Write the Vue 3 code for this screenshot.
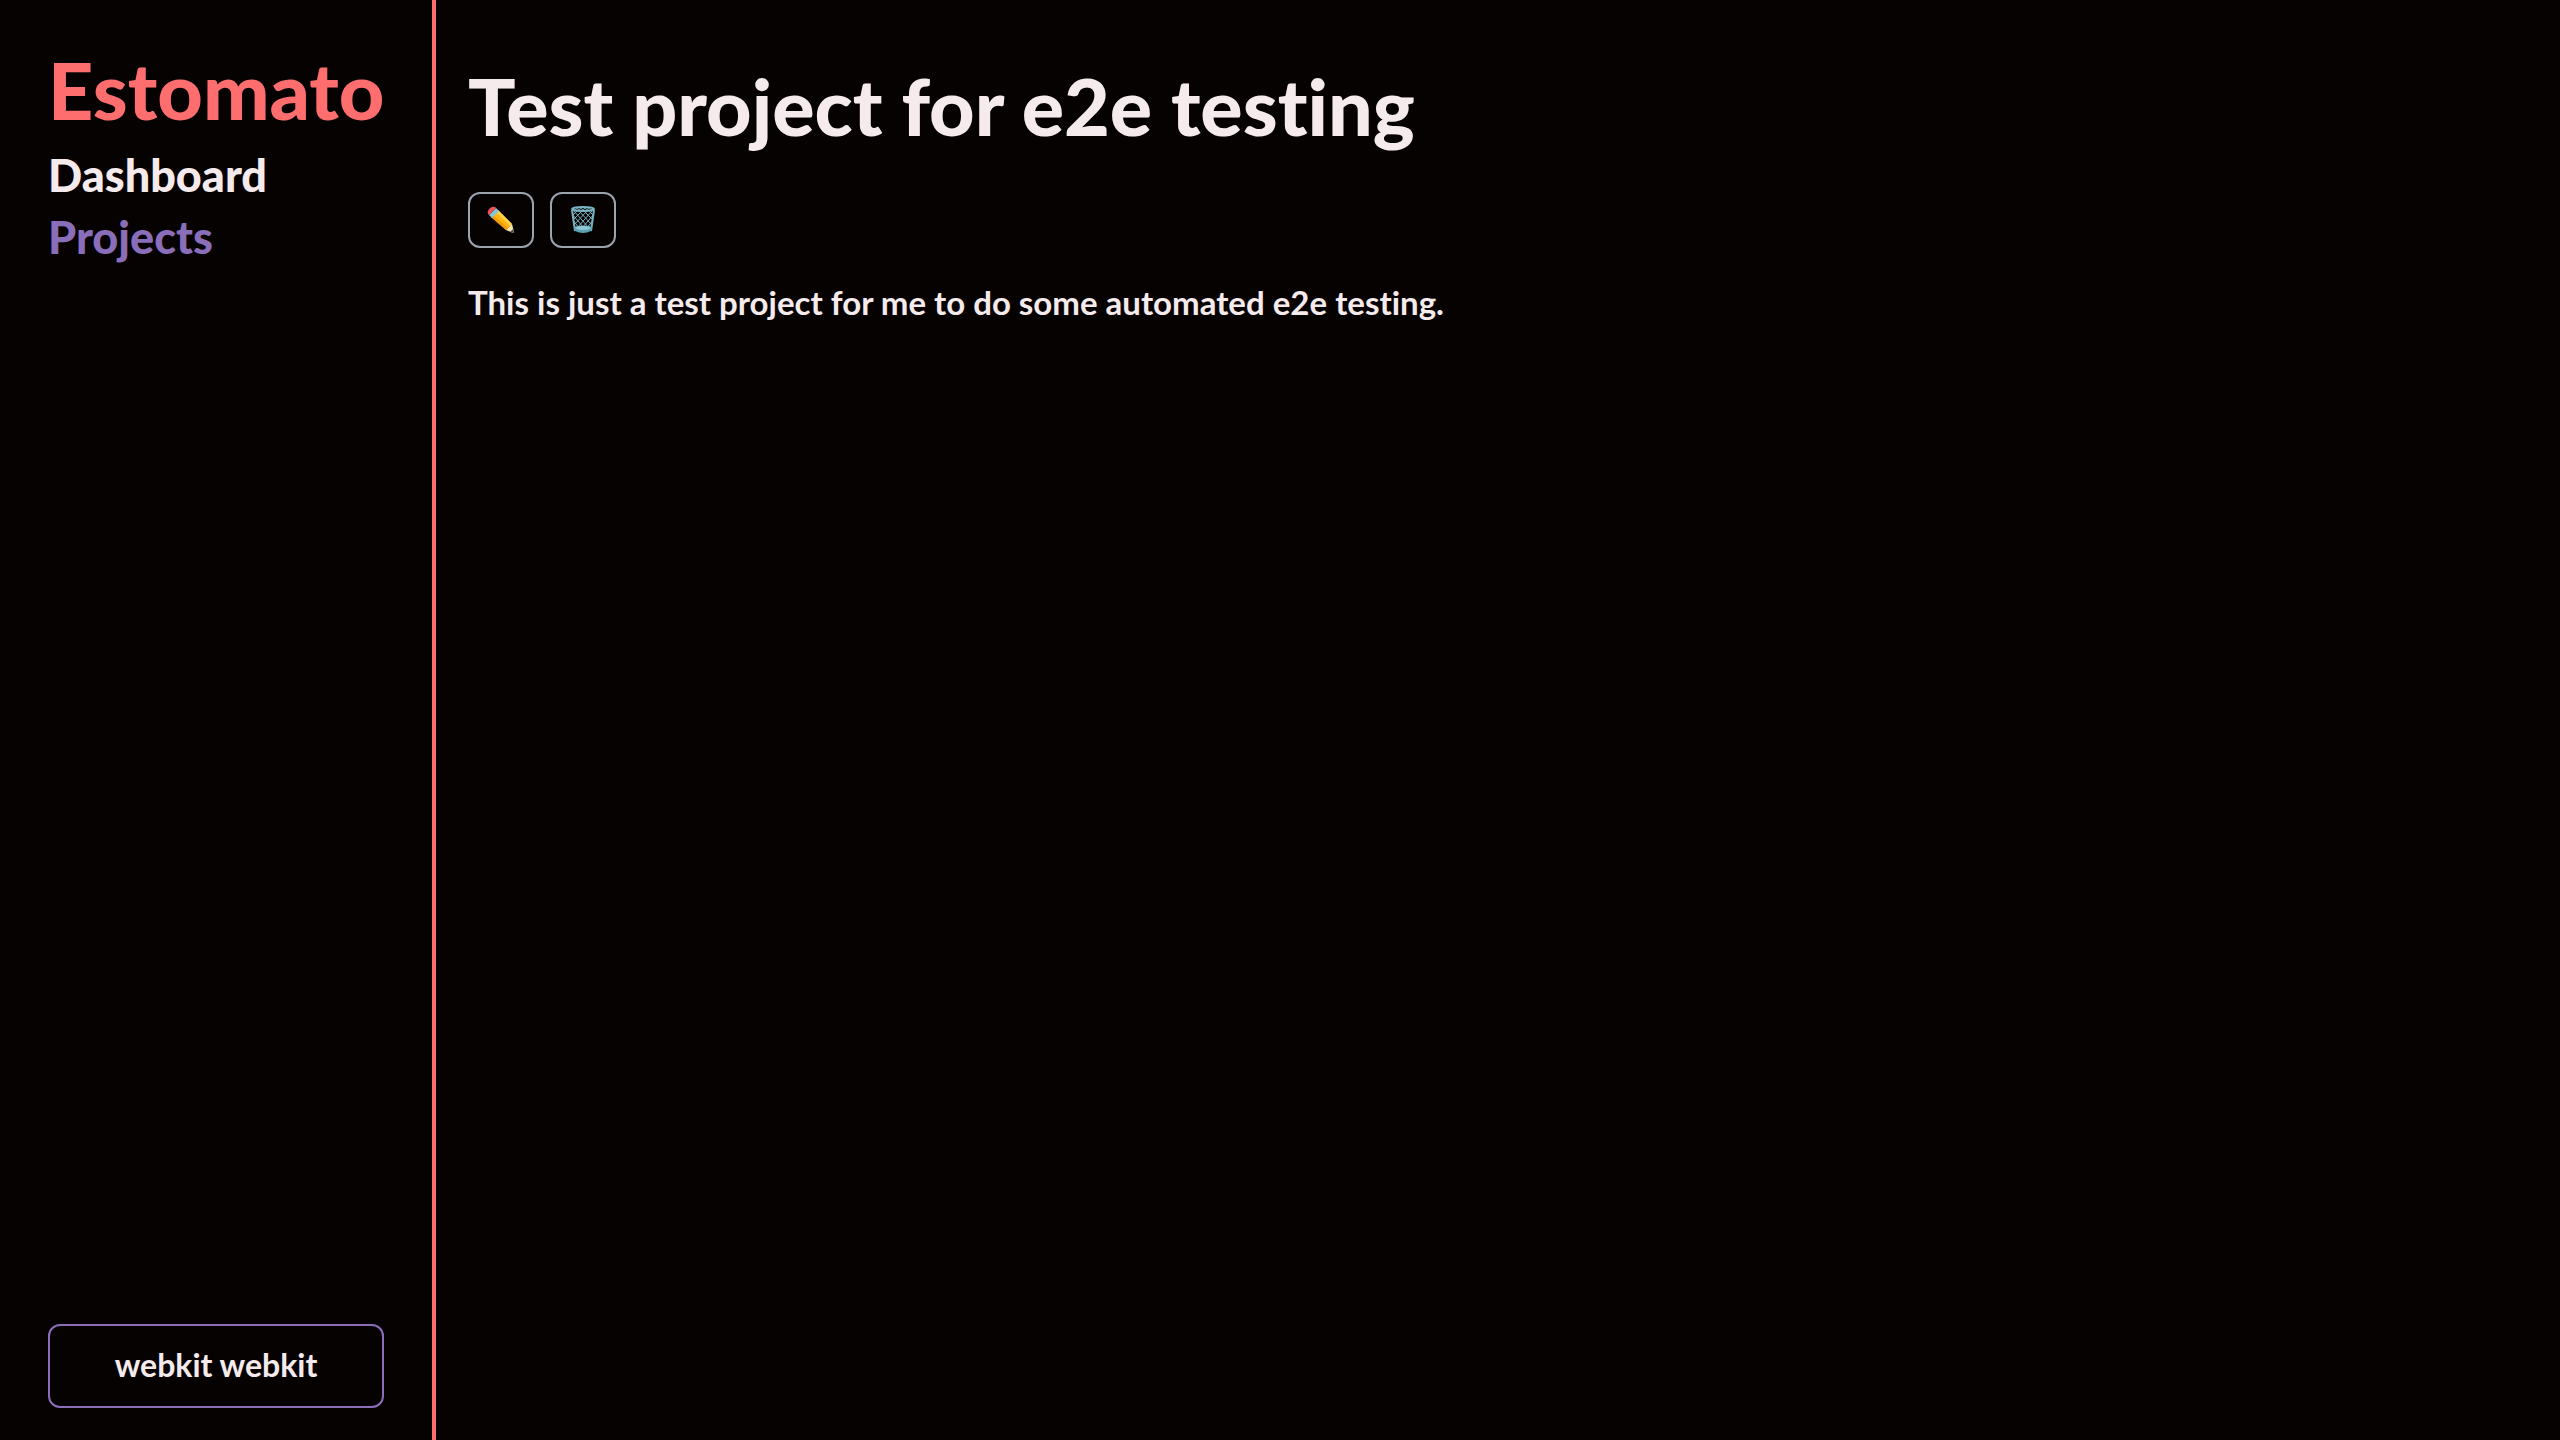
<script setup>
const links = [
  { label: 'Dashboard', href: '#dashboard', active: false },
  { label: 'Projects', href: '#projects', active: true },
]
</script>

<template>
  <div class="shell">
    <aside class="sidebar">
      <a class="brand" href="#home">Estomato</a>
      <nav class="nav">
        <a
          v-for="link in links"
          :key="link.label"
          :href="link.href"
          :class="{ active: link.active }"
        >{{ link.label }}</a>
      </nav>
      <button class="account" type="button">webkit webkit</button>
    </aside>

    <main class="content">
      <h1>Test project for e2e testing</h1>
      <div class="actions">
        <button type="button" aria-label="Edit project">
          <svg viewBox="0 0 32 32" aria-hidden="true">
            <path d="M6 13 13 6 27 20 21 26Z" fill="#ffb70f" />
            <path d="M11 8 13 6 27 20 25 22Z" fill="#ffd24a" />
            <path d="M6 13 8 11 23 24 21 26Z" fill="#f39a08" />
            <path d="M21 26 27 20 29 28Q29 29 28 29Z" fill="#ffe3a6" />
            <path d="M25 28 28 25 29 28Q29 29 28 29Z" fill="#4b5358" />
            <path d="M4 11 11 4 14 7 7 14Z" fill="#82c5d5" />
            <path d="M4 11 3 10Q2 8 4 5Q7 2 10 3L11 4Z" fill="#f0525a" />
          </svg>
        </button>
        <button type="button" aria-label="Delete project">
          <svg viewBox="0 0 32 32" aria-hidden="true">
            <g fill="none" stroke="#79b1c0" stroke-width="1">
              <path d="M5 6 8 27M27 6 24 27" stroke-width="2" />
              <path d="M5 10 17 24M7 7 22 24M12 7 25 21M17 7 26 16M22 7 27 12M6 16 12 24" />
              <path d="M27 10 15 24M25 7 10 24M20 7 7 21M15 7 6 16M10 7 5 12M26 16 20 24" />
            </g>
            <path d="M7 23Q16 20 25 23L24 27Q16 31 8 27Z" fill="#5aa0b2" />
            <path d="M8 23Q16 21 24 23Q23 26 16 26Q9 26 8 23Z" fill="#8fc8d4" />
            <ellipse cx="16" cy="5" rx="11" ry="2" fill="#142329" stroke="#79b4c3" stroke-width="2" />
            <path d="M8 6 10 4 12 6 14 4 16 6 18 4 20 6 22 4 24 6" fill="none" stroke="#65909c" />
          </svg>
        </button>
      </div>
      <p>This is just a test project for me to do some automated e2e testing.</p>
    </main>
  </div>
</template>

<style>
body {
  background: #060202;
}
</style>

<style scoped>
.shell {
  display: flex;
  min-height: 100vh;
  color: #f6ebec;
  background: #060202;
  font-family: Lato, sans-serif;
  font-variant-ligatures: none;
}

.sidebar {
  display: flex;
  flex: none;
  flex-direction: column;
  box-sizing: border-box;
  width: 436px;
  padding: 46px 48px 32px;
  border-right: 4px solid #ff6e6e;
}

.brand {
  color: #ff6e6e;
  font-size: 79px;
  font-weight: 900;
  line-height: 88px;
  text-decoration: none;
}

.nav {
  display: flex;
  flex-direction: column;
  gap: 4px;
  margin-top: 12px;
}

.nav a {
  color: inherit;
  font-size: 45px;
  font-weight: 900;
  line-height: 58px;
  text-decoration: none;
}

.nav .active {
  color: #8a6eb9;
}

.account {
  height: 84px;
  margin-top: auto;
  padding: 0 0 2px;
  border: 2px solid #8a6eb9;
  border-radius: 12px;
  color: inherit;
  background: transparent;
  font: 700 32px/40px Lato, sans-serif;
}

.content {
  flex: 1;
  padding: 62px 32px;
}

h1 {
  margin: 0;
  font-size: 79px;
  font-weight: 900;
  line-height: 88px;
}

.actions {
  display: flex;
  gap: 16px;
  margin-top: 42px;
}

.actions button {
  display: flex;
  align-items: center;
  justify-content: center;
  width: 66px;
  height: 56px;
  padding: 0;
  border: 2px solid #9ca3af;
  border-radius: 12px;
  background: transparent;
}

.actions svg {
  flex: none;
  width: 32px;
  height: 32px;
}

p {
  margin: 34px 0 0;
  font-size: 33px;
  font-weight: 700;
  line-height: 40px;
}
</style>
